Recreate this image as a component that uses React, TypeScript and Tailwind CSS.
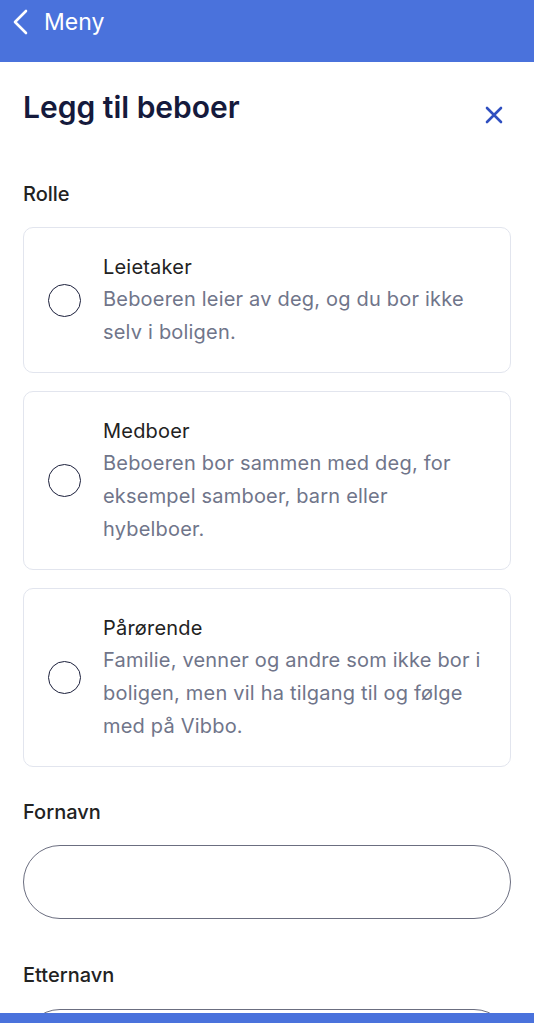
import * as React from "react";

const roles = [
  {
    title: "Leietaker",
    text: "Beboeren leier av deg, og du bor ikke selv i boligen.",
  },
  {
    title: "Medboer",
    text: "Beboeren bor sammen med deg, for eksempel samboer, barn eller hybelboer.",
  },
  {
    title: "Pårørende",
    text: "Familie, venner og andre som ikke bor i boligen, men vil ha tilgang til og følge med på Vibbo.",
  },
];

/**
 * Single selectable role card with radio circle.
 */
function RoleCard(props: { title: string; text: string }) {
  return (
    <div className="flex items-center rounded-[10px] border border-[#e2e5ee] bg-white pl-[24px] pr-[16px] py-[23px]">
      <div className="size-[33px] shrink-0 rounded-full border-[1.5px] border-[#1b1f3b]" />
      <div className="ml-[22px] flex max-w-[386px] flex-col tracking-[0.2px]">
        <span className="text-[20px] leading-[32px] text-[#222]">{props.title}</span>
        <span className="text-[20px] leading-[33px] text-[#70758a]">{props.text}</span>
      </div>
    </div>
  );
}

export default function App() {
  return (
    <div
      className="relative h-[1023px] w-[534px] overflow-hidden bg-white"
      style={{ fontFamily: "Inter, 'Open Sans', sans-serif" }}
    >
      <div className="flex h-[62px] items-start gap-[13px] bg-[#4a72dc] pl-[11px] pt-[8px] text-white">
        <svg width="20" height="28" viewBox="0 0 20 28" fill="none">
          <path d="M15 3 L4 14 L15 25" stroke="white" strokeWidth="2.6" strokeLinecap="round" strokeLinejoin="round" />
        </svg>
        <span className="text-[23px] leading-[28px]">Meny</span>
      </div>

      <div className="px-[23px]">
        <div className="flex items-center justify-between pt-[23px]">
          <h1 className="text-[30px] font-semibold text-[#151a3c]">Legg til beboer</h1>
          <svg width="18" height="18" viewBox="0 0 18 18" className="mr-[8px] mt-[14px]">
            <path d="M2 2 L16 16 M16 2 L2 16" stroke="#2f4fc0" strokeWidth="2.6" strokeLinecap="round" />
          </svg>
        </div>

        <div className="mt-[49px] text-[20px] font-medium text-[#222]">Rolle</div>

        <div className="mt-[18px] flex flex-col gap-[18px]">
          {roles.map((r) => (
            <RoleCard key={r.title} title={r.title} text={r.text} />
          ))}
        </div>

        <div className="mt-[30px] text-[20px] font-medium text-[#222]">Fornavn</div>
        <div className="mt-[18px] h-[74px] rounded-full border-[1.5px] border-[#6b6e80]" />

        <div className="mt-[41px] text-[20px] font-medium text-[#222]">Etternavn</div>
        <div className="mt-[19px] h-[74px] rounded-full border-[1.5px] border-[#6b6e80]" />
      </div>

      <div className="absolute bottom-0 left-0 h-[10px] w-full bg-[#4a72dc]" />
    </div>
  );
}
